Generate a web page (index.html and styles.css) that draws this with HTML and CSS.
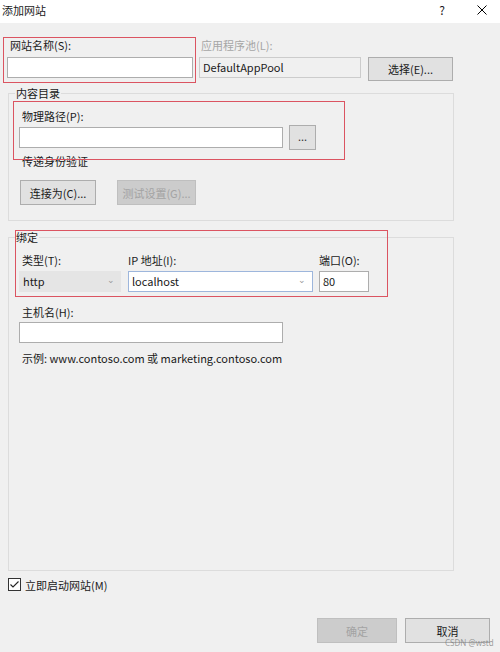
FILE: index.html
```html
<!DOCTYPE html>
<html lang="zh-CN">
<head>
<meta charset="utf-8">
<title>添加网站</title>
<link rel="stylesheet" href="styles.css">
</head>
<body>
<div class="dialog">
  <div class="titlebar">
    <span class="title">添加网站</span>
    <div class="title-actions">
      <span class="help">?</span>
      <svg class="close" width="10" height="10" viewBox="0 0 10 10"><path d="M0.5 0.5 L9.5 9.5 M9.5 0.5 L0.5 9.5" stroke="#000" stroke-width="1" fill="none"/></svg>
    </div>
  </div>

  <div class="row1">
    <div class="col col-name">
      <div class="label">网站名称(S):</div>
      <div class="input"></div>
    </div>
    <div class="col col-pool">
      <div class="label disabled-label">应用程序池(L):</div>
      <div class="input readonly">DefaultAppPool</div>
    </div>
    <div class="btn btn-select">选择(E)...</div>
  </div>

  <div class="group group1">
    <span class="legend">内容目录</span>
    <div class="label sub-label path-label">物理路径(P):</div>
    <div class="path-row">
      <div class="input path-input"></div>
      <div class="btn btn-browse">...</div>
    </div>
    <div class="label sub-label auth-label">传递身份验证</div>
    <div class="btn-row">
      <div class="btn btn-connect">连接为(C)...</div>
      <div class="btn disabled btn-test">测试设置(G)...</div>
    </div>
  </div>

  <div class="group group2">
    <span class="legend">绑定</span>
    <div class="bind-row">
      <div class="field f-type">
        <div class="label type-label">类型(T):</div>
        <div class="select">http<span class="chev">&#8964;</span></div>
      </div>
      <div class="field f-ip">
        <div class="label">IP 地址(I):</div>
        <div class="input combo">localhost<span class="chev">&#8964;</span></div>
      </div>
      <div class="field f-port">
        <div class="label">端口(O):</div>
        <div class="input">80</div>
      </div>
    </div>
    <div class="label sub-label host-label">主机名(H):</div>
    <div class="input host-input"></div>
    <div class="label sub-label example">示例: www.contoso.com 或 marketing.contoso.com</div>
  </div>

  <div class="check-row">
    <svg class="checkbox" width="13" height="13" viewBox="0 0 13 13"><rect x="0.5" y="0.5" width="12" height="12" fill="#fff" stroke="#333"/><path d="M2.5 6.5 L5 9 L10.5 3.5" stroke="#222" stroke-width="1.1" fill="none"/></svg>
    <span class="check-label">立即启动网站(M)</span>
  </div>

  <div class="footer">
    <div class="btn disabled btn-ok">确定</div>
    <div class="btn btn-cancel">取消</div>
  </div>

  <div class="redbox rb1"></div>
  <div class="redbox rb2"></div>
  <div class="redbox rb3"></div>
  <div class="watermark">CSDN @wstd</div>
</div>
</body>
</html>
```

FILE: styles.css
```css
* { box-sizing: border-box; }
html, body { margin: 0; padding: 0; }
body {
  background: #f0f0f0;
  font-family: "Noto Sans CJK SC", "Noto Sans", sans-serif;
  font-size: 11px;
  color: #1a1a1a;
}
.dialog {
  position: relative;
  width: 500px;
  height: 652px;
  overflow: hidden;
}
.titlebar {
  height: 23px;
  background: #fff;
  display: flex;
  align-items: center;
  justify-content: space-between;
  padding: 0 13px 3px 2px;
  line-height: 14px;
}
.title-actions { display: flex; align-items: center; }
.help { margin-right: 32px; font-size: 12px; }
.close { display: block; }

.label { line-height: 14px; height: 14px; white-space: nowrap; }
.disabled-label { color: #a6a6a6; }

.input {
  height: 21px;
  background: #fff;
  border: 1px solid #adadad;
  line-height: 19px;
  padding-left: 3px;
  white-space: nowrap;
  position: relative;
}
.readonly { background: #f0f0f0; border-color: #cccccc; }

.btn {
  height: 25px;
  background: #e1e1e1;
  border: 1px solid #adadad;
  display: flex;
  align-items: center;
  justify-content: center;
  line-height: 14px;
  white-space: nowrap;
}
.btn.disabled { background: #cccccc; border-color: #bfbfbf; color: #a3a3a3; }

.row1 {
  display: flex;
  align-items: flex-start;
  margin-top: 15px;
  padding-left: 7px;
}
.col .label { margin-left: 3px; }
.col .input { margin-top: 5px; }
.col-name { width: 186px; }
.col-pool { width: 162px; margin-left: 6px; }
.col-pool .label { margin-left: 2px; }
.btn-select { width: 85px; height: 24px; margin-left: 7px; margin-top: 19px; }

.group {
  margin-left: 8px;
  width: 446px;
  border: 1px solid #dcdcdc;
  padding-left: 10px;
}
.legend {
  display: block;
  width: max-content;
  margin-top: -8px;
  margin-left: -4px;
  padding: 0 1px;
  background: #f0f0f0;
  line-height: 14px;
}
.group1 { margin-top: 12px; padding-bottom: 15px; }
.sub-label { padding-left: 3px; }
.path-label { margin-top: 9px; }
.path-row { display: flex; align-items: center; margin-top: 2px; }
.path-input { width: 264px; }
.btn-browse { width: 27px; margin-left: 6px; color: #333; padding-bottom: 4px; }
.auth-label { margin-top: 4px; }
.btn-row { display: flex; margin-top: 12px; }
.btn-connect { width: 76px; margin-left: 1px; }
.btn-test { width: 79px; margin-left: 21px; }

.group2 { margin-top: 16px; height: 334px; }
.bind-row { display: flex; margin-top: 9px; }
.field .label { margin-bottom: 4px; }
.type-label { padding-left: 3px; }
.f-type { width: 102px; }
.f-ip { width: 185px; margin-left: 7px; }
.f-port { width: 50px; margin-left: 6px; }
.select {
  height: 21px;
  background: #e5e5e5;
  line-height: 21px;
  padding-left: 4px;
  position: relative;
}
.chev {
  position: absolute;
  right: 6px;
  top: -2px;
  font-size: 9px;
  color: #9a9a9a;
}
.combo { border-color: #9db6dc; }
.host-label { margin-top: 13px; }
.host-input { width: 264px; margin-top: 3px; }
.example { margin-top: 8px; }

.check-row {
  display: flex;
  align-items: center;
  margin-top: 7px;
  padding-left: 8px;
  height: 13px;
}
.checkbox { display: block; }
.check-label { margin-left: 4px; line-height: 14px; }

.footer {
  display: flex;
  justify-content: flex-end;
  margin-top: 27px;
  padding-right: 10px;
}
.btn-ok { width: 80px; }
.btn-cancel { width: 85px; margin-left: 8px; }

.redbox {
  position: absolute;
  border: 1px solid #db5461;
  pointer-events: none;
}
.rb1 { left: 3px; top: 37px; width: 193px; height: 46px; }
.rb2 { left: 13px; top: 101px; width: 332px; height: 59px; }
.rb3 { left: 15px; top: 230px; width: 373px; height: 67px; }

.watermark {
  position: absolute;
  left: 445px;
  top: 638px;
  font-size: 8px;
  line-height: 10px;
  color: rgba(120, 120, 120, 0.7);
  font-family: "Noto Sans", sans-serif;
}
```
